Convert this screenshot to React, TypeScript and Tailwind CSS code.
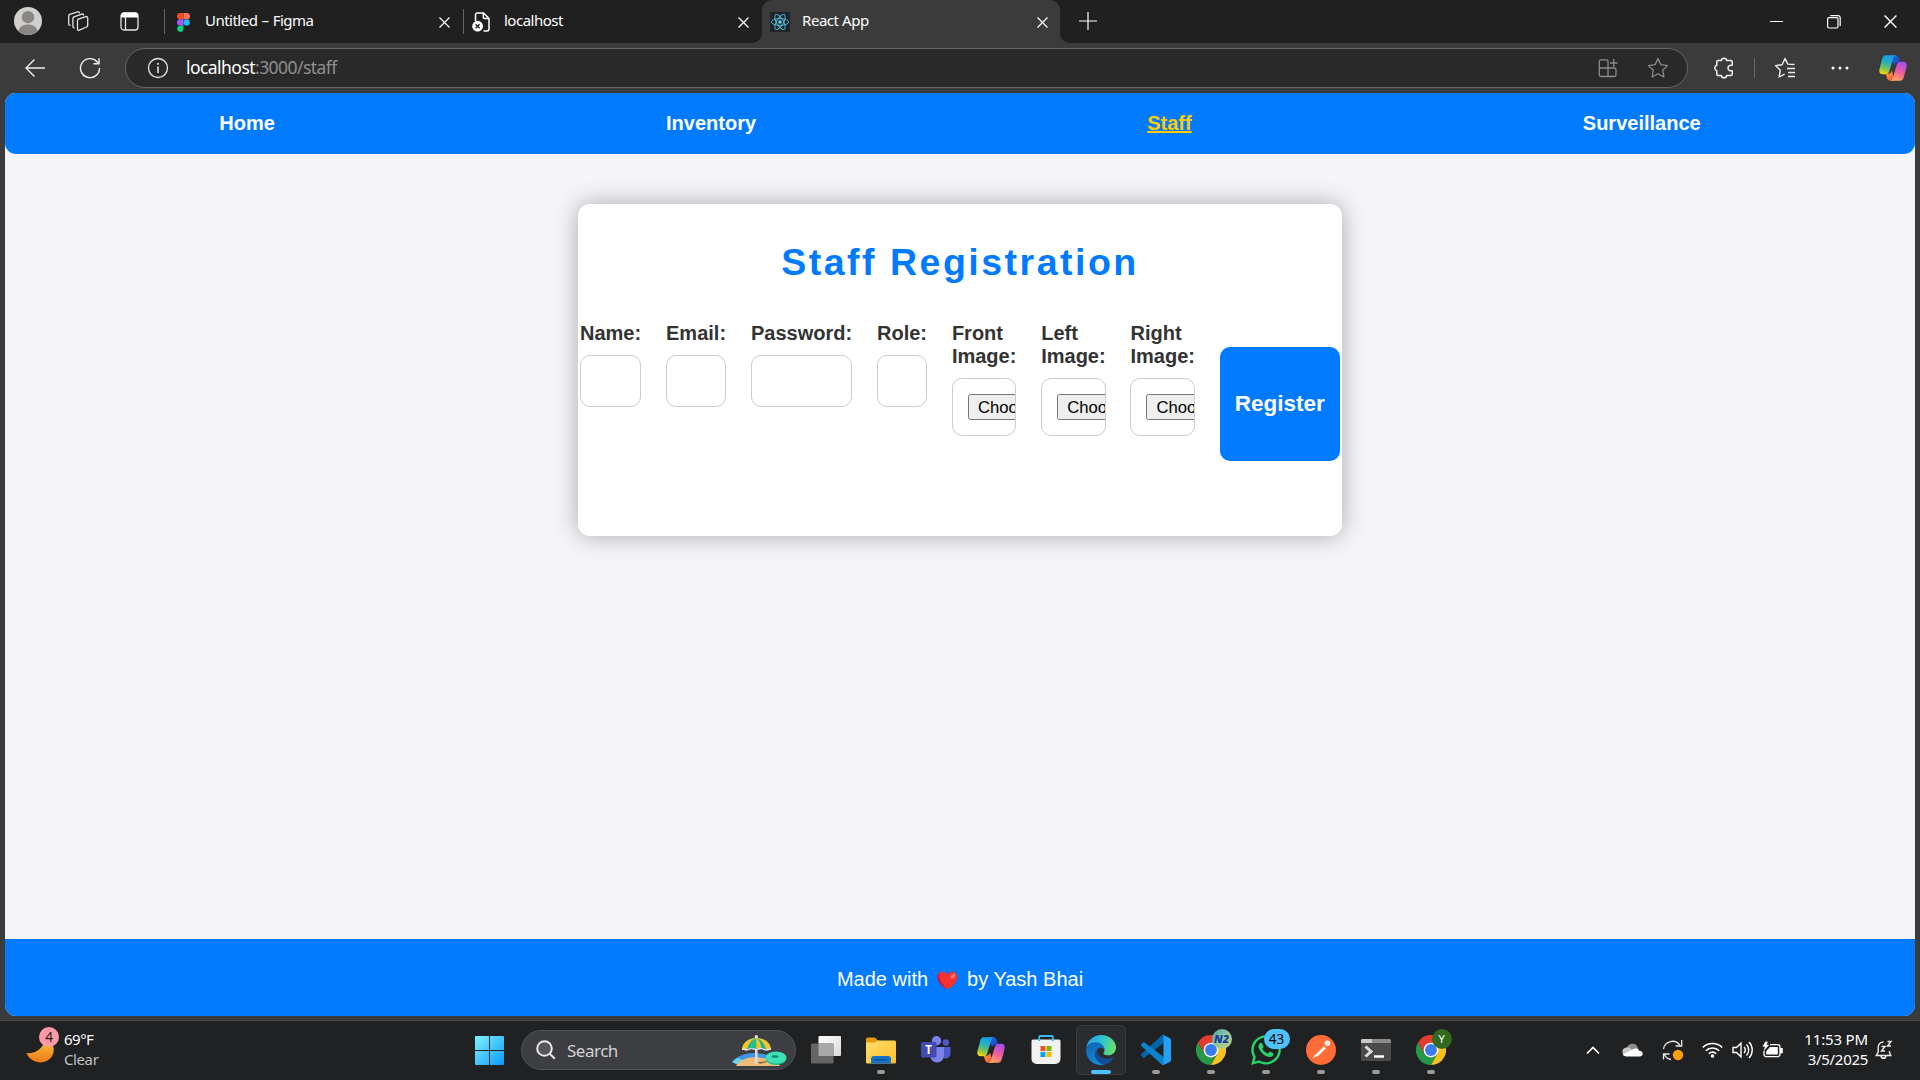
import React from "react";
import { FaWhatsapp } from "react-icons/fa";

const ui = "font-['Noto_Sans','Open_Sans',sans-serif]";

function CloseX({ size = 11 }: { size?: number }) {
  return (
    <svg width={size} height={size} viewBox="0 0 11 11" fill="none" stroke="#fff" strokeWidth="1.2">
      <path d="M.5.5l10 10M10.5.5l-10 10" />
    </svg>
  );
}

function Avatar() {
  return (
    <svg width="28" height="28" viewBox="0 0 28 28" className="ml-3.5 rounded-full">
      <rect width="28" height="28" fill="#d2d0ce" />
      <circle cx="14" cy="10.2" r="6.2" fill="#8a8886" />
      <path d="M4 25.5c1-6 5-8 10-8s9 2 10 8l-4 3H8z" fill="#8a8886" />
    </svg>
  );
}

function WorkspacesIcon() {
  return (
    <svg width="22" height="21" viewBox="0 0 22 21" fill="none" stroke="#e4e4e4" strokeWidth="1.3" strokeLinejoin="round" strokeLinecap="round">
      <path d="M11.3 8.2l7.6-2.6c1-.3 1.8.2 1.8 1.2v7.6c0 .8-.4 1.3-1.1 1.6l-7.3 3.2c-1 .4-1.8 0-1.8-1V9.8c0-.8.2-1.300.8-1.600z" />
      <path d="M7.200 16.800c-.8 0-1.300-.400-1.300-1.200V7.400c0-.8.400-1.300 1.100-1.600l7.800-2.700c.8-.2 1.500 0 1.800.9" />
      <path d="M3.100 14.200c-.8 0-1.400-.400-1.400-1.200V4.900c0-.8.400-1.300 1.100-1.600L10.600.9c.8-.2 1.500 0 1.800.9" />
    </svg>
  );
}

function TabActionsIcon() {
  return (
    <svg width="19" height="19" viewBox="0 0 19 19" fill="none">
      <rect x="1" y="1" width="17" height="17" rx="3" stroke="#e4e4e4" strokeWidth="1.300" />
      <path d="M1 3.500a3 3 0 013-3h11a3 3 0 013 3V5.500H1z" fill="#fff" />
      <path d="M5.500 5v13" stroke="#e4e4e4" strokeWidth="1.300" />
    </svg>
  );
}

function FigmaIcon() {
  return (
    <svg width="13" height="19" viewBox="0 0 13 19">
      <path d="M6.500 0h-3.300a3.150 3.150 0 000 6.300h3.300z" fill="#f24e1e" />
      <path d="M6.500 0h3.300a3.150 3.150 0 010 6.300h-3.300z" fill="#ff7262" />
      <path d="M6.500 6.300h-3.300a3.150 3.150 0 000 6.300h3.300z" fill="#a259ff" />
      <circle cx="9.700" cy="9.450" r="3.150" fill="#1abcfe" />
      <path d="M6.500 12.600h-3.300a3.150 3.150 0 103.300 3.150z" fill="#0acf83" />
    </svg>
  );
}

function PageErrorIcon() {
  return (
    <svg width="19" height="20" viewBox="0 0 19 20" fill="none">
      <path d="M3.500 9V3.200C3.500 1.900 4.200 1 5.500 1h6l5.500 5.500v10.300c0 1.300-.700 2.200-2 2.200h-3.500M11.300 1v4.200c0 .9.400 1.300 1.300 1.300H17" stroke="#fff" strokeWidth="1.500" />
      <circle cx="5.600" cy="14.200" r="5.400" fill="#fff" />
      <path d="M3.600 12.200l4 4m0-4l-4 4" stroke="#202020" strokeWidth="1.300" />
    </svg>
  );
}

function ReactLogo() {
  return (
    <svg width="20" height="20" viewBox="0 0 20 20">
      <rect width="20" height="20" rx="1.500" fill="#20232a" />
      <g fill="none" stroke="#53c1de" strokeWidth="0.900">
        <ellipse cx="10" cy="10" rx="8.600" ry="3.400" />
        <ellipse cx="10" cy="10" rx="8.600" ry="3.400" transform="rotate(60 10 10)" />
        <ellipse cx="10" cy="10" rx="8.600" ry="3.400" transform="rotate(120 10 10)" />
      </g>
      <circle cx="10" cy="10" r="1.700" fill="#61dafb" />
    </svg>
  );
}

function TabStrip() {
  return (
    <header className={`flex h-[43px] items-start bg-[#202020] text-[15px] text-white ${ui}`}>
      <div className="flex h-[42px] w-[164px] shrink-0 items-center">
        <Avatar />
        <span className="ml-[25px]"><WorkspacesIcon /></span>
        <span className="ml-[31px]"><TabActionsIcon /></span>
      </div>
      <div className="mt-[9px] h-[25px] w-px bg-[#666]" />
      <div className="flex h-[43px] w-[298px] items-center pl-3">
        <span className="mt-[2px]"><FigmaIcon /></span>
        <span className="ml-[15px] w-[234px] whitespace-nowrap pb-[2px] tracking-[-0.52px] [word-spacing:0.8px]">Untitled – Figma</span>
        <span className="mt-px"><CloseX /></span>
      </div>
      <div className="mt-[9px] h-[25px] w-px bg-[#666]" />
      <div className="flex h-[43px] w-[298px] items-center pl-2">
        <PageErrorIcon />
        <span className="ml-[13px] w-[234px] pb-[2px] tracking-[-0.5px]">localhost</span>
        <span className="mt-px"><CloseX /></span>
      </div>
      <div className="relative flex h-[43px] w-[298px] items-center rounded-t-[10px] bg-[#3b3b3b] pl-[8px]">
        <svg className="absolute -left-[10px] bottom-0" width="10" height="10"><path d="M10 0v10H0A10 10 0 0010 0z" fill="#3b3b3b" /></svg>
        <svg className="absolute -right-[10px] bottom-0" width="10" height="10"><path d="M0 0v10h10A10 10 0 010 0z" fill="#3b3b3b" /></svg>
        <span className="mt-px"><ReactLogo /></span>
        <span className="ml-[12px] w-[235px] pb-[2px] tracking-[-0.45px]">React App</span>
        <span className="mt-px"><CloseX /></span>
      </div>
      <div className="flex h-[42px] w-[55px] items-center justify-center">
        <svg width="18" height="18" stroke="#fff" strokeWidth="1.200"><path d="M9 0v18M0 9h18" /></svg>
      </div>
      <div className="ml-auto flex h-[43px] w-[172px] shrink-0 items-center">
        <span className="flex w-[57px] justify-center"><span className="h-px w-[13px] bg-white" /></span>
        <span className="flex w-[57px] justify-center">
          <svg width="14" height="14" fill="none" stroke="#fff" strokeWidth="1.200"><rect x=".6" y="2.600" width="10.400" height="10.400" rx="1.500" /><path d="M3.200.6h7.600c1.500 0 2.400.9 2.400 2.400v8" /></svg>
        </span>
        <span className="flex w-[56px] justify-center"><CloseX size={13} /></span>
      </div>
    </header>
  );
}

function CopilotIcon({ id }: { id: string }) {
  return (
    <svg width="28" height="26" viewBox="0 0 28 26">
      <defs>
        <linearGradient id={`${id}a`} x1="0.500" y1="0" x2="0.250" y2="1">
          <stop offset="0" stopColor="#1f9bea" />
          <stop offset=".35" stopColor="#22b0c6" />
          <stop offset=".7" stopColor="#7cc250" />
          <stop offset="1" stopColor="#ffd90f" />
        </linearGradient>
        <linearGradient id={`${id}b`} x1="0.700" y1="0" x2="0.300" y2="1">
          <stop offset="0" stopColor="#a64df0" />
          <stop offset=".5" stopColor="#ee5aa0" />
          <stop offset="1" stopColor="#ffa960" />
        </linearGradient>
        <linearGradient id={`${id}c`} x1="0" y1="0" x2="1" y2="1">
          <stop offset="0" stopColor="#1b6fe0" />
          <stop offset="1" stopColor="#1640c4" />
        </linearGradient>
        <linearGradient id={`${id}d`} x1="0" y1="0" x2="1" y2="1">
          <stop offset="0" stopColor="#ffb02e" />
          <stop offset="1" stopColor="#f0403f" />
        </linearGradient>
      </defs>
      <path d="M12 .3h4.600c1.700 0 2.700 1 3.200 2.700l1.200 4.300c-3.500 0-5 .8-6 3.300z" fill={`url(#${id}c)`} />
      <path d="M16 25.700h-4.800c-1.700 0-2.700-1-3.200-2.600L6.800 18.800c3.700 0 5.200-.8 6.200-3.400z" fill={`url(#${id}d)`} />
      <path d="M6.800.3H17c-1.600.4-2.400 1.700-3 3.700L10.400 16c-.7 2.300-2 3.300-4 3.300H3.800C.800 19.300-.3 17 .5 14L3 4.500C3.700 1.700 5 .3 6.800.3z" fill={`url(#${id}a)`} />
      <path d="M21.200 25.700H11.200c1.600-.4 2.400-1.700 3-3.700L17.800 10c.7-2.300 2-3.300 4-3.300h2.400c3 0 4.100 2.300 3.300 5.300L25 21.500c-.7 2.800-2 4.200-3.800 4.200z" fill={`url(#${id}b)`} />
    </svg>
  );
}

function Toolbar() {
  return (
    <div className={`flex h-[50px] items-center bg-[#3b3b3b] pl-[7px] ${ui}`}>
      <span className="flex w-[55px] justify-center">
        <svg width="20" height="18" fill="none" stroke="#f0f0f0" strokeWidth="1.400"><path d="M9.500.5L1 9l8.500 8.500M1 9h19" /></svg>
      </span>
      <span className="flex w-[55px] justify-center">
        <svg width="22" height="22" viewBox="0 0 22 22" fill="none" stroke="#f0f0f0" strokeWidth="1.400"><path d="M20.500 11A9.500 9.500 0 1118 4.700l2 2M20 1.200v5.600h-5.600" /></svg>
      </span>
      <div className="ml-2 flex h-10 w-[1563px] items-center rounded-full border border-[#666] bg-[#292929] pl-[21px] pr-[4px]">
        <svg width="22" height="22" viewBox="0 0 22 22" fill="none" stroke="#e6e6e6" strokeWidth="1.300"><circle cx="11" cy="11" r="9.500" /><path d="M11 9.500V16" strokeWidth="1.600" /><path d="M11 6v1.800" strokeWidth="1.800" /></svg>
        <span className="ml-[17px] pb-px text-[17.500px] tracking-[-0.55px] text-[#8f8f8f]"><span className="text-white">localhost</span>:3000/staff</span>
        <span className="ml-auto flex w-[50px] justify-center">
          <svg width="20" height="20" viewBox="0 0 20 20" fill="none" stroke="#8b8b8b" strokeWidth="1.300">
            <path d="M10 10V3.500A1.700 1.700 0 008.300 1.800H3A1.700 1.700 0 001.300 3.500v13.300A1.700 1.700 0 003 18.500h13.300a1.700 1.700 0 001.700-1.700V11.700A1.700 1.700 0 0016.300 10H1.300M10 10v8.500M12 5h7.500M15.700 1v8" />
          </svg>
        </span>
        <span className="flex w-[50px] justify-center">
          <svg width="22" height="22" viewBox="0 0 22 22" fill="none" stroke="#8b8b8b" strokeWidth="1.300" strokeLinejoin="round"><path d="M11 1.500l2.900 6.200 6.600.9-4.800 4.700 1.200 6.700-5.900-3.200L5.100 20l1.200-6.700L1.500 8.600l6.600-.9z" /></svg>
        </span>
      </div>
      <span className="ml-[9px] flex w-[54px] justify-center">
        <svg width="20" height="22" viewBox="0 0 20 22" fill="none" stroke="#f0f0f0" strokeWidth="1.500" strokeLinejoin="round">
          <path d="M4 3.500h3.200c.3-1.300 1.400-2.300 2.800-2.300s2.500 1 2.800 2.300H17c.7 0 1.200.5 1.200 1.200v3.600c-2-.6-4.200.7-4.200 2.700s2.200 3.300 4.200 2.700v3.600c0 .7-.5 1.200-1.200 1.200h-4.200c-.3 1.300-1.400 2.300-2.800 2.300s-2.500-1-2.800-2.300H4c-.7 0-1.200-.5-1.200-1.200v-3.500C1.700 13.500.8 12.400.8 11s.9-2.500 2-2.800V4.700c0-.7.500-1.200 1.200-1.200z" />
        </svg>
      </span>
      <span className="ml-[3px] h-5 w-px bg-[#666]" />
      <span className="ml-px flex w-[58px] justify-center">
        <svg width="22" height="22" viewBox="0 0 22 22" fill="none" stroke="#f0f0f0" strokeWidth="1.400" strokeLinejoin="round">
          <path d="M20.500 7.500l-6.700-.4L11 1.500 8.100 7.700l-6.600.9 4.800 4.700L5.100 20l5.500-2.800M13 11.500h8M14 15.500h7M14 19.500h7" />
        </svg>
      </span>
      <span className="flex w-[52px] justify-center">
        <svg width="18" height="4" fill="#fff"><circle cx="2" cy="2" r="1.500" /><circle cx="9" cy="2" r="1.500" /><circle cx="16" cy="2" r="1.500" /></svg>
      </span>
      <span className="flex w-[54px] justify-center"><CopilotIcon id="tb" /></span>
    </div>
  );
}

function TextField({ label, type = "text" }: { label: string; type?: string }) {
  return (
    <label className="flex w-min flex-col gap-2.5 leading-[23px]">
      {label}
      <input type={type} className="h-[52px] w-full rounded-[10px] border border-[#ccc] bg-white" />
    </label>
  );
}

function FileField({ label }: { label: string }) {
  return (
    <div className="flex w-[64.400px] flex-col gap-2.5 leading-[23px]">
      <span>{label}</span>
      <div className="flex h-[58px] w-full items-center overflow-hidden rounded-[10px] border border-[#ccc] pl-[15px]">
        <button type="button" className="h-[26px] shrink-0 whitespace-nowrap rounded-[2.500px] border border-[#767676] bg-[#efefef] px-[9px] text-[16.670px] font-normal leading-[23px] text-black">Choose File</button>
      </div>
    </div>
  );
}

function Heart() {
  return (
    <svg width="21" height="19" viewBox="0 0 21 19" className="mx-[9px] mt-[2px]">
      <path d="M10.500 18.600C6.500 15.800.5 11.500.5 6.200.5 3 2.700.8 5.500.8c2.200 0 4 1.200 5 3 1-1.800 2.800-3 5-3 2.800 0 5 2.200 5 5.400 0 5.300-6 9.600-10 12.400z" fill="#f8312f" />
      <path d="M10.500 18.600C6.500 15.800.5 11.500.5 6.200.5 4.200 1.300 2.700 2.600 1.700 1.200 6.500 4 12.500 10.500 18.600z" fill="#ca0b4a" />
      <ellipse cx="16" cy="5" rx="2" ry="3" transform="rotate(35 16 5)" fill="#f37366" />
    </svg>
  );
}

function WebPage() {
  return (
    <main className="mx-[5px] flex h-[923px] flex-col overflow-hidden rounded-[11px] bg-[#f4f4f9] font-['Liberation_Sans',Arial,sans-serif] text-xl">
      <nav className="flex h-[61px] shrink-0 items-center justify-around rounded-b-[11px] bg-[#007bff] px-[18.750px] pb-px font-bold leading-[23px] text-white">
        <a>Home</a>
        <a>Inventory</a>
        <a className="text-[#ffcc00] underline">Staff</a>
        <a>Surveillance</a>
      </nav>
      <section className="mt-[50px] flex h-[332px] w-[764px] flex-col self-center rounded-[12px] bg-white px-[2px] shadow-[0_0_25px_rgba(0,0,0,0.3)]">
        <h1 className="mt-[36px] text-center text-[37.500px] font-bold leading-[44px] tracking-[2.500px] text-[#007bff]">Staff Registration</h1>
        <form className="mt-[38px] flex items-start gap-[24.900px] font-bold text-[#333]">
          <TextField label="Name:" />
          <TextField label="Email:" />
          <TextField label="Password:" type="password" />
          <TextField label="Role:" />
          <FileField label="Front Image:" />
          <FileField label="Left Image:" />
          <FileField label="Right Image:" />
          <button type="button" className="mt-[25px] h-[114px] flex-1 rounded-[10px] bg-[#007bff] pb-px text-[22.500px] text-white">Register</button>
        </form>
      </section>
      <footer className="mt-auto flex h-[77px] shrink-0 items-center justify-center bg-[#007bff] pb-px pt-[4px] leading-[23px] text-white">
        Made with <Heart /> by Yash Bhai
      </footer>
    </main>
  );
}

function BeachIcon() {
  return (
    <svg width="56" height="34" viewBox="0 0 56 34">
      <path d="M1 28C9 19 22 17 36 21l6 4-32 7z" fill="#3b97e8" />
      <path d="M1 28l5-4 6 2-3 6z" fill="#6fd0ea" />
      <path d="M5 32c6-9 17-10 27-8 8 1 14 4 17 8z" fill="#f0bd78" />
      <path d="M26 28l13-1-10 3z" fill="#9a6b45" />
      <rect x="24" y="3" width="2.600" height="27" rx="1" fill="#e3d5dc" />
      <path d="M11 15C12 8 18 4 25.300 4S39 8 40 15l-5 1-5-2-5 2-5-2-5 2z" fill="#1db58c" />
      <path d="M11 15C12 8 18 4 25.300 4c-5 2-8 6-9.300 12zM20 15c0-5 2-9 5.300-11 3.200 2 5 6 5 11l-5-1zM35 16c-1-6-4-10-9.700-12C33 4 39 8 40 15z" fill="#fac22b" />
      <path d="M11 15l5 1 4-1.500 5.300 1 5-1 4.700 1.500 5-1" fill="none" stroke="#e8e2f0" strokeWidth="1.300" />
      <path d="M20 14.500c0-5 2-8.500 5.300-10.500v10z" fill="#20bd91" />
      <circle cx="25.300" cy="2.700" r="1.700" fill="#eadfe3" />
      <ellipse cx="45" cy="24.500" rx="10.500" ry="6.500" fill="#1fb98e" />
      <ellipse cx="45" cy="23.500" rx="10.500" ry="6" fill="#3fe0b6" />
      <ellipse cx="44" cy="22.500" rx="3.500" ry="1.300" fill="#168a72" />
    </svg>
  );
}

function StartIcon() {
  return (
    <svg width="29" height="29" viewBox="0 0 29 29">
      <defs><linearGradient id="win" x1="0" y1="0" x2="1" y2="1"><stop offset="0" stopColor="#7df3ff" /><stop offset="1" stopColor="#0e97fb" /></linearGradient></defs>
      <path d="M0 1a1 1 0 011-1h13v14H0zM15 0h13a1 1 0 011 1v13H15zM0 15h14v14H1a1 1 0 01-1-1zM15 15h14v13a1 1 0 01-1 1H15z" fill="url(#win)" />
    </svg>
  );
}

function TaskViewIcon() {
  return (
    <svg width="30" height="28" viewBox="0 0 30 28">
      <defs><linearGradient id="tv" x1="0" y1="0" x2="1" y2="1"><stop offset="0" stopColor="#fff" /><stop offset="1" stopColor="#dadada" /></linearGradient></defs>
      <rect x="7.500" y="0" width="22.500" height="20" rx="1" fill="url(#tv)" />
      <rect x="0" y="7.500" width="22.500" height="20" rx="1" fill="#656565" />
      <path d="M7.500 7.500h15V20h-15z" fill="#a8a8a8" />
    </svg>
  );
}

function FolderIcon() {
  return (
    <svg width="30" height="27" viewBox="0 0 30 27">
      <defs><linearGradient id="fo" x1="0" y1="0" x2="1" y2="1"><stop offset="0" stopColor="#ffdc6b" /><stop offset="1" stopColor="#fdbf2d" /></linearGradient></defs>
      <path d="M0 2A1.500 1.500 0 011.500.5H9l3 3h1v4H0z" fill="#e29a06" />
      <path d="M0 5.500h9l3-2h16.500A1.500 1.500 0 0130 5v20a1.500 1.500 0 01-1.500 1.500h-27A1.500 1.500 0 010 25z" fill="url(#fo)" />
      <path d="M5 26.500V22a3 3 0 013-3h14a3 3 0 013 3v4.500z" fill="#1473c5" />
      <path d="M8.500 22.700h13" stroke="#0b4c8c" strokeWidth="1.300" />
    </svg>
  );
}

function TeamsIcon() {
  return (
    <svg width="30" height="28" viewBox="0 0 30 28">
      <circle cx="24.800" cy="6.500" r="3.200" fill="#5059c9" />
      <path d="M20 11h9.500v7a5 5 0 01-9 2.500z" fill="#5059c9" />
      <circle cx="15.500" cy="4.800" r="4.700" fill="#7b83eb" />
      <path d="M9 11h14v8.500a7 7 0 01-14 0z" fill="#7b83eb" />
      <rect x="0" y="6" width="15.500" height="15.500" rx="1.500" fill="#434bb0" />
      <text x="7.700" y="17.700" textAnchor="middle" fontFamily="Open Sans" fontWeight="700" fontSize="11.500" fill="#fff">T</text>
    </svg>
  );
}

function StoreIcon() {
  return (
    <svg width="30" height="30" viewBox="0 0 30 30">
      <path d="M8.200 6V1.800c0-.4.300-.8.800-.8h12c.5 0 .8.400.8.800V6" fill="none" stroke="#39b8f0" strokeWidth="1.800" />
      <path d="M.5 6A1.500 1.500 0 012 4.500h26A1.500 1.500 0 0129.500 6v18a5 5 0 01-5 5h-19a5 5 0 01-5-5z" fill="#f1f1f1" />
      <path d="M8.200 6V4M21.800 6V4" stroke="#39b8f0" strokeWidth="1.800" />
      <path d="M9.500 11h5v5h-5z" fill="#f25022" /><path d="M15.500 11h5v5h-5z" fill="#7fba00" />
      <path d="M9.500 17h5v5h-5z" fill="#00a4ef" /><path d="M15.500 17h5v5h-5z" fill="#ffb900" />
    </svg>
  );
}

function EdgeIcon() {
  return (
    <svg width="30" height="30" viewBox="0 0 30 30">
      <defs>
        <linearGradient id="e1" x1="0" y1="0.300" x2="1" y2="0.500"><stop offset="0" stopColor="#2a9fe0" /><stop offset=".5" stopColor="#2bc3d2" /><stop offset="1" stopColor="#6be064" /></linearGradient>
        <linearGradient id="e2" x1="0" y1="0" x2="0.500" y2="1"><stop offset="0" stopColor="#0f5fb0" /><stop offset="1" stopColor="#1590dd" /></linearGradient>
      </defs>
      <path d="M.3 13C1.200 5.500 7.500 0 15 0c8.500 0 15 6 15 12.500 0 4.800-3.600 7.800-7.800 7.800-3 0-4.700-1-4.700-2.100 0-.8 1-1.300 1-3.200C18.500 11 14.500 8 10 8 5 8 1.500 10.500.3 13z" fill="url(#e1)" />
      <path d="M0 15C.5 10.500 4.500 7.300 9.500 7.300c5 0 9 3.200 9 7.700-1.500-2.500-4-3-6-1.800-2.500 1.600-2 6 .5 8.300 3.500 3.300 9.500 3.500 13.500 1.500C23.700 27.500 19.500 30 15 30 6.500 30 0 23.500 0 15z" fill="url(#e2)" />
      <path d="M10.800 13.500c-3 3.500-2.500 9 .7 12.500 1.600 1.800 3.600 3 6 3.800 4.500-.7 8-3.300 10-6.500.4-.7-.1-1-.7-.7-4.500 2-10 1.300-13.300-1.700-2.300-2.200-3.200-5-2.700-7.400z" fill="#124d98" />
    </svg>
  );
}

function VSCodeIcon() {
  return (
    <svg width="30" height="30" viewBox="0 0 100 100">
      <path d="M96.460 10.800L75.860.88c-2.390-1.150-5.240-.67-7.110 1.200L1.300 63.580c-1.810 1.650-1.810 4.510 0 6.160l5.510 5.010c1.490 1.350 3.720 1.450 5.320.24L93.360 13.370c2.720-2.070 6.640-.13 6.640 3.300z" fill="#0065a9" />
      <path d="M96.460 89.200l-20.600 9.920c-2.390 1.150-5.240.67-7.110-1.200L1.300 36.420c-1.810-1.650-1.810-4.510 0-6.160l5.510-5.010c1.490-1.350 3.720-1.450 5.320-.24l81.230 61.620c2.720 2.070 6.640.13 6.640-3.300z" fill="#0b82cc" />
      <path d="M75.860 99.130c-2.390 1.150-5.240.66-7.110-1.200 2.310 2.310 6.250.67 6.250-2.590V4.670c0-3.260-3.940-4.900-6.250-2.590 1.870-1.870 4.720-2.350 7.110-1.200l20.600 9.900C98.620 11.820 100 14.010 100 16.410v67.180c0 2.400-1.380 4.590-3.540 5.630z" fill="#22a2f2" />
    </svg>
  );
}

function ChromeIcon() {
  return (
    <svg width="30" height="30" viewBox="0 0 48 48">
      <path d="M3.200 12A24 24 0 0144.800 12L24 12 13.600 30z" fill="#e33b2e" />
      <path d="M3.200 12A24 24 0 0024 48L34.400 30H13.600z" fill="#279847" />
      <path d="M24 48A24 24 0 0044.800 12H24L34.400 30z" fill="#fcc31e" />
      <circle cx="24" cy="24" r="11.800" fill="#fff" />
      <circle cx="24" cy="24" r="9.500" fill="#3a7ced" />
    </svg>
  );
}

function PostmanIcon() {
  return (
    <svg width="30" height="30" viewBox="0 0 30 30">
      <circle cx="15" cy="15" r="15" fill="#ff6c37" />
      <path d="M6.500 23.800l2.700-4.300 8.600-8.300 2.200 2-8.200 8-2.600.6z" fill="#fff" />
      <path d="M9.500 19.500l8-7.500" stroke="#ff6c37" strokeWidth=".6" />
      <circle cx="21.500" cy="8.300" r="2.700" fill="#fff" />
      <path d="M20.500 9.500l2-1.200" stroke="#ff6c37" strokeWidth=".6" />
    </svg>
  );
}

function TerminalIcon() {
  return (
    <svg width="30" height="22" viewBox="0 0 30 22">
      <rect width="30" height="22" rx="1.500" fill="#4a4a4a" />
      <path d="M0 4V1.500A1.500 1.500 0 011.500 0h27A1.500 1.500 0 0130 1.500V4z" fill="#8c8c8c" />
      <path d="M0 4V1.500A1.500 1.500 0 011.500 0H11v4z" fill="#c9c9c9" />
      <path d="M4.500 7.500l5.500 5-5.500 5" fill="none" stroke="#ddd" strokeWidth="3" />
      <path d="M13 17.500h10" stroke="#fff" strokeWidth="2.500" />
    </svg>
  );
}

function TaskItem({ children, running, active }: { children: React.ReactNode; running?: boolean; active?: boolean }) {
  return (
    <div className={`relative mx-[2.500px] flex h-[50px] w-[50px] items-center justify-center rounded-[5px] ${active ? "border border-[#38393c] bg-[#2b2c2f]" : ""}`}>
      {children}
      {running && <span className="absolute bottom-px left-[21px] h-[4px] w-2 rounded-full bg-[#9a9a9a]" />}
      {active && <span className="absolute bottom-0 left-[14px] h-[4px] w-5 rounded-full bg-[#4cc2ff]" />}
    </div>
  );
}

function Taskbar() {
  return (
    <div className={`flex h-[60px] items-start border-t border-[#454545] bg-[#202123] pt-1 ${ui}`}>
      <div className="flex w-[462px] items-start pl-[26px] text-[15px] leading-5 text-white">
        <div className="relative mt-[3px] h-[36px] w-[33px]">
          <svg width="29" height="36" viewBox="0 0 29 36">
            <defs><linearGradient id="moon" x1="0" y1="0" x2="0" y2="1"><stop offset="0" stopColor="#f8c83a" /><stop offset="1" stopColor="#ee7a18" /></linearGradient></defs>
            <path d="M.5 25c8 1 16-3 19-14 9 3 10 12 6 18C20 37 5 36.500.5 25z" fill="url(#moon)" />
          </svg>
          <span className="absolute -top-px left-[13px] flex h-5 w-5 items-center justify-center rounded-full bg-[#ff99a4] text-[13.500px] leading-5 text-[#202020]">4</span>
        </div>
        <div className="ml-[5px] mt-[4px] tracking-[-0.5px]">
          <div>69°F</div>
          <div className="tracking-[-0.4px] text-[#c0c0c0]">Clear</div>
        </div>
      </div>
      <div className="flex items-start">
        <TaskItem><StartIcon /></TaskItem>
        <div className="ml-[4px] mt-[5px] flex h-10 w-[275px] items-center rounded-full border border-[#525356] bg-[#3d3e41] pl-[14px]">
          <svg width="20" height="20" viewBox="0 0 20 20" fill="#55565a" stroke="#e8e8e8" strokeWidth="2"><circle cx="8.500" cy="8.500" r="7.300" /><path d="M13.800 13.800l5 5" /></svg>
          <span className="ml-[11px] pt-px text-[17px] tracking-[-0.5px] text-[#d2d2d2]">Search</span>
          <span className="ml-auto mr-[8px] mt-px"><BeachIcon /></span>
        </div>
        <div className="ml-[2px] flex">
          <TaskItem><TaskViewIcon /></TaskItem>
          <TaskItem running><FolderIcon /></TaskItem>
          <TaskItem><TeamsIcon /></TaskItem>
          <TaskItem><CopilotIcon id="tk" /></TaskItem>
          <TaskItem><StoreIcon /></TaskItem>
          <TaskItem active><EdgeIcon /></TaskItem>
          <TaskItem running><VSCodeIcon /></TaskItem>
          <TaskItem running>
            <ChromeIcon />
            <span className="absolute left-[26px] top-[4px] flex h-5 w-5 items-center justify-center rounded-full bg-linear-to-br from-[#3fa7a5] via-[#8fc6a0] to-[#c8cf62] text-[11px] font-black italic text-[#173f9c]">N2</span>
          </TaskItem>
          <TaskItem running>
            <FaWhatsapp size={34} color="#25d366" />
            <span className="absolute left-[23px] top-[4px] flex h-5 w-[26px] items-center justify-center rounded-full bg-[#4cc2ff] text-[13.500px] text-black">43</span>
          </TaskItem>
          <TaskItem running><PostmanIcon /></TaskItem>
          <TaskItem running><TerminalIcon /></TaskItem>
          <TaskItem running>
            <ChromeIcon />
            <span className="absolute left-[26px] top-[4px] flex h-5 w-5 items-center justify-center rounded-full bg-[#33691e] text-[11px] text-white">Y</span>
          </TaskItem>
        </div>
      </div>
      <div className="ml-auto flex h-[50px] w-[343px] shrink-0 items-center text-white">
        <span className="ml-[8px] flex w-[16px] justify-center"><svg width="14" height="9" fill="none" stroke="#fff" strokeWidth="1.700"><path d="M1 7.500l6-6 6 6" /></svg></span>
        <svg width="21" height="14" viewBox="0 0 21 14" className="ml-[21px]">
          <path d="M5 5.500A5.500 5.500 0 0115.500 4l1 3-8 3z" fill="#8d8d8d" />
          <path d="M5 13a4.300 4.300 0 01-.6-8.600c2-.3 4 .6 5.200 2L17 13z" fill="#c8c8c8" />
          <path d="M4.500 13.500c-2 0-3-.8-3.800-2L12 5.800c3-1.200 5 .6 5.200 2 2 0 3.500 1.300 3.500 3s-1.400 2.700-3 2.700z" fill="#fff" />
        </svg>
        <svg width="22" height="22" viewBox="0 0 22 22" className="ml-[19px]" fill="none">
          <path d="M1.500 10A9 9 0 0118 6.500M19.700 1v6h-6M9 20.500a9 9 0 01-6.500-4.700M1.500 20.500V15h6" stroke="#e8e8e8" strokeWidth="1.300" />
          <circle cx="16" cy="16" r="5.200" fill="#ff9d0a" />
        </svg>
        <svg width="21" height="16" viewBox="0 0 21 16" className="ml-[18px]" fill="none" stroke="#fff" strokeWidth="1.600">
          <path d="M.8 5.500a13.800 13.800 0 0119.400 0M3.800 8.700a9.500 9.500 0 0113.400 0M6.800 11.700a5.200 5.200 0 017.400 0" /><circle cx="10.500" cy="14" r="1" fill="#fff" />
        </svg>
        <svg width="21" height="20" viewBox="0 0 21 20" className="ml-[9px]" fill="none" stroke="#fff" strokeWidth="1.400">
          <path d="M1 7.500h3.500L9 3.200v13.600l-4.500-4.300H1zM12 7a4.500 4.500 0 010 6M14.500 4.500a8 8 0 010 11M17 2a11.500 11.500 0 010 16" />
        </svg>
        <svg width="21" height="18" viewBox="0 0 21 18" className="ml-[9px]" fill="none" stroke="#fff" strokeWidth="1.300">
          <path d="M8 3.700h7.500A2.500 2.500 0 0118 6.200v7a2.500 2.500 0 01-2.500 2.500h-11A2.500 2.500 0 012 13.200V10" /><path d="M4.200 13.500V10.300L8 6h7.800v7.500z" fill="#fff" stroke="none" /><path d="M18.500 7.700h1.600v4h-1.600z" fill="#fff" /><path d="M3.500.8L.8 5.500h2.500L2 9.500l4.700-5.500H4.300L5.500.8z" fill="#fff" strokeWidth=".4" />
        </svg>
        <div className="ml-[14px] w-[71px] whitespace-nowrap text-right text-[15px] leading-5">
          <div className="-mt-[2px] tracking-[-0.15px]">11:53 PM</div>
          <div className="tracking-[-0.3px]">3/5/2025</div>
        </div>
        <svg width="18" height="20" viewBox="0 0 18 20" className="ml-[7px]" fill="none" stroke="#f0f0f0" strokeWidth="1.400">
          <path d="M8.500 2C5.500 2 3.200 4.200 3.200 7.500V12L1.200 15.500h14.600L14.500 12.500V11M6 16c.3 1.500 1.300 2.300 2.500 2.300S10.700 17.500 11 16M6.500 6.500H10L6.500 11H10M12.500 1.500H16L12.500 6H16" />
        </svg>
      </div>
    </div>
  );
}

export default function App() {
  return (
    <div className="flex h-[1080px] w-[1920px] flex-col overflow-hidden bg-[#3b3b3b]">
      <TabStrip />
      <Toolbar />
      <WebPage />
      <div className="h-1 bg-[#3b3b3b]" />
      <Taskbar />
    </div>
  );
}
